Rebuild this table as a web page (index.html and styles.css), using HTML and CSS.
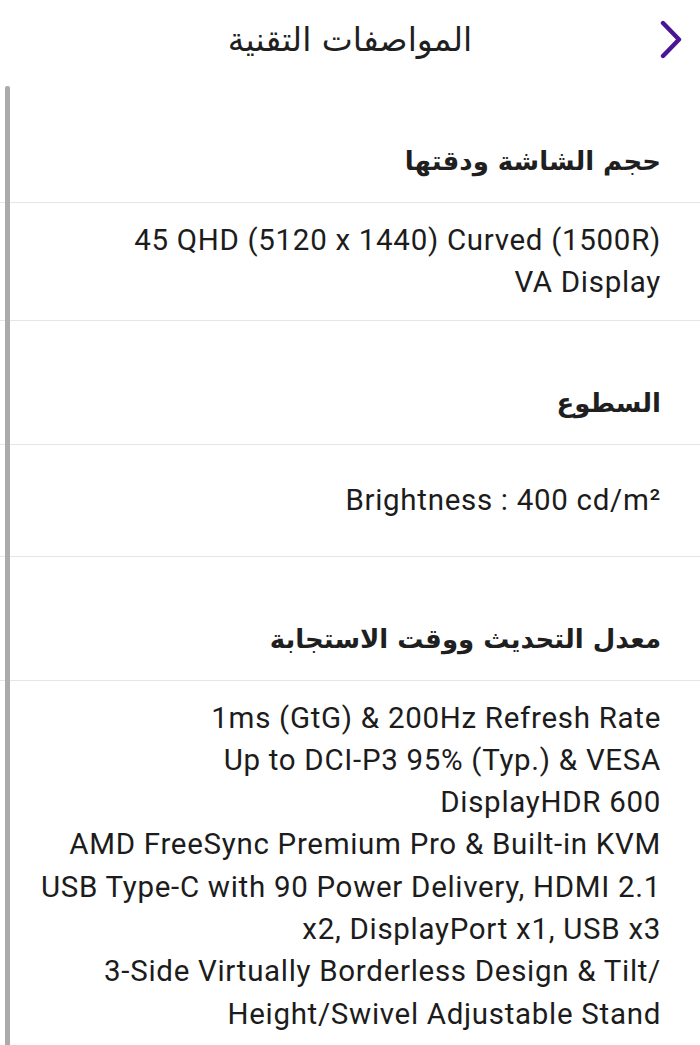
FILE: index.html
```html
<!DOCTYPE html>
<html lang="ar" dir="rtl">
<head>
  <meta charset="UTF-8">
  <meta name="viewport" content="width=device-width, initial-scale=1.0">
  <title>المواصفات التقنية</title>
  <link rel="stylesheet" href="styles.css">
</head>
<body>
  <header class="topbar">
    <button class="back-btn" aria-label="رجوع">
      <svg width="28" height="40" viewBox="0 0 28 40">
        <path d="M5 3 L21 19.5 L5 36" fill="none" stroke="#4b1495" stroke-width="4.4" stroke-linecap="round" stroke-linejoin="round"/>
      </svg>
    </button>
    <h1 class="title">المواصفات التقنية</h1>
    <span></span>
  </header>

  <main class="specs">
    <div class="spec-head">حجم الشاشة ودقتها</div>
    <div class="spec-value" dir="ltr">
      <p>45 QHD (5120 x 1440) Curved (1500R)<br>VA Display</p>
    </div>

    <div class="spec-head">السطوع</div>
    <div class="spec-value" dir="ltr">
      <p>Brightness : 400 cd/m²</p>
    </div>

    <div class="spec-head">معدل التحديث ووقت الاستجابة</div>
    <div class="spec-value" dir="ltr">
      <p>1ms (GtG) &amp; 200Hz Refresh Rate<br>
      Up to DCI-P3 95% (Typ.) &amp; VESA<br>
      DisplayHDR 600<br>
      AMD FreeSync Premium Pro &amp; Built-in KVM<br>
      USB Type-C with 90 Power Delivery, HDMI 2.1<br>
      x2, DisplayPort x1, USB x3<br>
      3-Side Virtually Borderless Design &amp; Tilt/<br>
      Height/Swivel Adjustable Stand</p>
    </div>
  </main>
</body>
</html>
```

FILE: styles.css
```css
body {
  margin: 0;
  padding: 0;
  background-color: #ffffff;
  color: #1c1c1c;
  font-family: Roboto, "DejaVu Sans", sans-serif;
}

.topbar {
  display: grid;
  grid-template-columns: 56px 1fr 56px;
  align-items: center;
  height: 79px;
}

.back-btn {
  background: none;
  border: none;
  padding: 0;
  display: flex;
  justify-content: center;
  cursor: pointer;
}

.title {
  margin: 0;
  text-align: center;
  font-family: "DejaVu Sans", sans-serif;
  font-weight: normal;
  font-size: 33px;
  color: #1f1f1f;
}

.specs {
  position: relative;
}

/* scrollbar thumb on the left */
.specs::before {
  content: "";
  position: absolute;
  left: 5px;
  top: 7px;
  bottom: 0;
  width: 5px;
  border-radius: 2px 2px 0 0;
  background-color: #ababab;
}

.spec-head,
.spec-value {
  border-bottom: 1px solid #e6e6e6;
  padding: 0 39px 0 20px;
  box-sizing: border-box;
}

.spec-head {
  height: 124px;
  display: flex;
  align-items: flex-end;
  padding-bottom: 24px;
  font-family: "DejaVu Sans", sans-serif;
  font-weight: bold;
  font-size: 26px;
  line-height: 34px;
  color: #1f1f1f;
}

.spec-value {
  min-height: 112px;
  display: flex;
  align-items: center;
  justify-content: flex-end;
  padding-top: 16px;
  padding-bottom: 16px;
}

.spec-value p {
  margin: 0;
  text-align: right;
  font-size: 29.5px;
  letter-spacing: 0.7px;
  line-height: 42.3px;
  color: #1c1c1c;
}
```
